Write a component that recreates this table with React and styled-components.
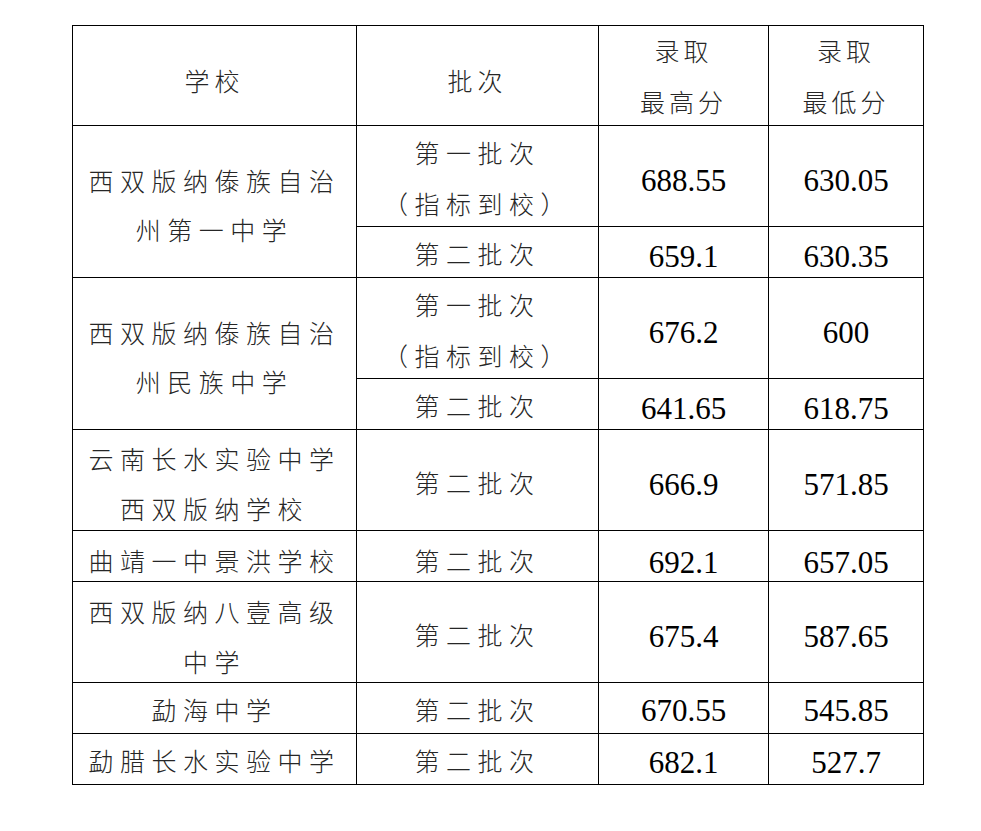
import React from "react";
import styled, { createGlobalStyle } from "styled-components";

const Global = createGlobalStyle`
  html, body { margin: 0; padding: 0; background: #ffffff; }
  body { width: 981px; height: 831px; overflow: hidden; }
`;

const Page = styled.div`
  padding: 25px 0 0 72px;
  box-sizing: border-box;
`;

const Table = styled.table`
  border-collapse: collapse;
  table-layout: fixed;
  width: 852px;
  border: 1px solid #000;
`;

const Cell = styled.td`
  border: 1px solid #000;
  padding: 0;
  text-align: center;
  vertical-align: middle;
  height: ${(p) => p.$h}px;
  box-sizing: border-box;
  overflow: visible;
`;

const Cjk = styled.div`
  font-family: "Noto Sans CJK SC", "Noto Sans", sans-serif;
  font-weight: 300;
  font-size: 25px;
  letter-spacing: ${(p) => p.$ls ?? 6.5}px;
  line-height: ${(p) => p.$lh ?? 51}px;
  color: #262626;
  white-space: nowrap;
  margin-top: ${(p) => p.$dy ?? 0}px;
  margin-bottom: ${(p) => -(p.$dy ?? 0) - 3}px;
`;

const Num = styled.div`
  font-family: "Liberation Serif", "Times New Roman", serif;
  font-size: 31px;
  font-weight: 400;
  color: #000;
  line-height: 51px;
  margin-top: ${(p) => p.$dy ?? 3}px;
  margin-bottom: ${(p) => -(p.$dy ?? 3) - 3}px;
`;

const Lines = ({ lines, ls, dy, lh }) => (
  <Cjk $ls={ls} $dy={dy} $lh={lh}>
    {lines.map((l, i) => (
      <React.Fragment key={i}>
        {i > 0 && <br />}
        {l}
      </React.Fragment>
    ))}
  </Cjk>
);

const School = ({ lines, dy = 2 }) => <Lines lines={lines} dy={dy} lh={lines.length > 1 ? 49.5 : 51} />;

const U1 = 51;
const U2 = 101;

export default function App() {
  return (
    <>
      <Global />
      <Page>
        <Table>
          <colgroup>
            <col style={{ width: 284 }} />
            <col style={{ width: 242 }} />
            <col style={{ width: 170 }} />
            <col style={{ width: 155 }} />
          </colgroup>
          <thead>
            <tr>
              <Cell $h={100}><Lines lines={["学校"]} ls={5} dy={3} /></Cell>
              <Cell $h={100}><Lines lines={["批次"]} ls={5} dy={3} /></Cell>
              <Cell $h={100}><Lines lines={["录取", "最高分"]} ls={4} dy={-1} /></Cell>
              <Cell $h={100}><Lines lines={["录取", "最低分"]} ls={4} dy={-1} /></Cell>
            </tr>
          </thead>
          <tbody>
            <tr>
              <Cell rowSpan={2} $h={U2}><School lines={["西双版纳傣族自治", "州第一中学"]} /></Cell>
              <Cell $h={U2}><Lines lines={["第一批次", "（指标到校）"]} /></Cell>
              <Cell $h={U2}><Num>688.55</Num></Cell>
              <Cell $h={U2}><Num>630.05</Num></Cell>
            </tr>
            <tr>
              <Cell $h={U1}><Lines lines={["第二批次"]} /></Cell>
              <Cell $h={U1}><Num>659.1</Num></Cell>
              <Cell $h={U1}><Num>630.35</Num></Cell>
            </tr>
            <tr>
              <Cell rowSpan={2} $h={U2}><School lines={["西双版纳傣族自治", "州民族中学"]} /></Cell>
              <Cell $h={U2}><Lines lines={["第一批次", "（指标到校）"]} /></Cell>
              <Cell $h={U2}><Num>676.2</Num></Cell>
              <Cell $h={U2}><Num>600</Num></Cell>
            </tr>
            <tr>
              <Cell $h={U1}><Lines lines={["第二批次"]} /></Cell>
              <Cell $h={U1}><Num>641.65</Num></Cell>
              <Cell $h={U1}><Num>618.75</Num></Cell>
            </tr>
            <tr>
              <Cell $h={U2}><School lines={["云南长水实验中学", "西双版纳学校"]} /></Cell>
              <Cell $h={U2}><Lines lines={["第二批次"]} dy={1} /></Cell>
              <Cell $h={U2}><Num>666.9</Num></Cell>
              <Cell $h={U2}><Num>571.85</Num></Cell>
            </tr>
            <tr>
              <Cell $h={U1}><School lines={["曲靖一中景洪学校"]} dy={3} /></Cell>
              <Cell $h={U1}><Lines lines={["第二批次"]} dy={3} /></Cell>
              <Cell $h={U1}><Num $dy={5}>692.1</Num></Cell>
              <Cell $h={U1}><Num $dy={5}>657.05</Num></Cell>
            </tr>
            <tr>
              <Cell $h={U2}><School lines={["西双版纳八壹高级", "中学"]} dy={3} /></Cell>
              <Cell $h={U2}><Lines lines={["第二批次"]} dy={1} /></Cell>
              <Cell $h={U2}><Num>675.4</Num></Cell>
              <Cell $h={U2}><Num>587.65</Num></Cell>
            </tr>
            <tr>
              <Cell $h={U1}><School lines={["勐海中学"]} dy={0} /></Cell>
              <Cell $h={U1}><Lines lines={["第二批次"]} /></Cell>
              <Cell $h={U1}><Num $dy={1}>670.55</Num></Cell>
              <Cell $h={U1}><Num $dy={1}>545.85</Num></Cell>
            </tr>
            <tr>
              <Cell $h={U1}><School lines={["勐腊长水实验中学"]} dy={0} /></Cell>
              <Cell $h={U1}><Lines lines={["第二批次"]} /></Cell>
              <Cell $h={U1}><Num $dy={2}>682.1</Num></Cell>
              <Cell $h={U1}><Num $dy={2}>527.7</Num></Cell>
            </tr>
          </tbody>
        </Table>
      </Page>
    </>
  );
}
